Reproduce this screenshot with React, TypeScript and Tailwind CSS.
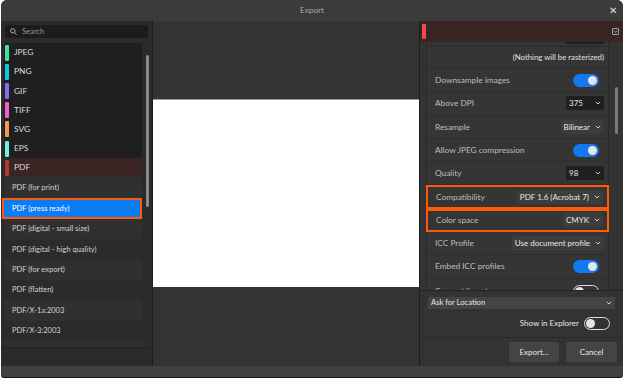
import React from 'react';

const formats = [
  { name: 'JPEG', color: 'bg-[#3ee6a0]' },
  { name: 'PNG', color: 'bg-[#12c9d6]' },
  { name: 'GIF', color: 'bg-[#8a6cf0]' },
  { name: 'TIFF', color: 'bg-[#f55fc8]' },
  { name: 'SVG', color: 'bg-[#f59a4a]' },
  { name: 'EPS', color: 'bg-[#6ff0e0]' },
];

const presets = [
  'PDF (for print)',
  'PDF (press ready)',
  'PDF (digital - small size)',
  'PDF (digital - high quality)',
  'PDF (for export)',
  'PDF (flatten)',
  'PDF/X-1a:2003',
  'PDF/X-3:2003',
  '',
];

function Chevron() {
  return (
    <svg width="6" height="4" viewBox="0 0 6 4" className="shrink-0">
      <path d="M0.8 0.8 L3 3 L5.2 0.8" fill="none" stroke="#cfcfcf" strokeWidth="1" />
    </svg>
  );
}

function Select({ value, light }: { value: string; light?: boolean }) {
  return (
    <div
      className={`h-[14px] min-w-[38px] flex items-center justify-between gap-[5px] pl-[3px] pr-[3px] rounded-[2px] text-[8px] text-[#e8e8e8] ${
        light ? 'bg-[#3c3c3c]' : 'bg-[#1f1f1f]'
      }`}
    >
      <span>{value}</span>
      <Chevron />
    </div>
  );
}

function Toggle({ on }: { on: boolean }) {
  if (on) {
    return (
      <div className="w-[26px] h-[13px] rounded-full bg-[#1478f0] flex items-center justify-end pr-[2px]">
        <div className="w-[9px] h-[9px] rounded-full bg-[#e6e6e6]" />
      </div>
    );
  }
  return (
    <div className="w-[26px] h-[13px] rounded-full border border-[#e0e0e0] flex items-center pl-[1px]">
      <div className="w-[9px] h-[9px] rounded-full bg-[#e6e6e6]" />
    </div>
  );
}

function Row({
  label,
  children,
  hl,
  h = 'h-[23.3px]',
}: {
  label?: string;
  children?: React.ReactNode;
  hl?: boolean;
  h?: string;
}) {
  return (
    <div
      className={`${h} shrink-0 flex items-center justify-between pl-[8px] pr-[4px] ${
        hl ? 'border-2 border-[#ff5a0a] -mx-[1px] pl-[7px] pr-[2px]' : 'border-b border-[#2c2c2c]'
      }`}
    >
      <span className="text-[8.3px] text-[#bdbdbd]">{label}</span>
      {children}
    </div>
  );
}

export default function App() {
  return (
    <div
      className="w-[628px] h-[383px] bg-white pl-[1px]"
      style={{ fontFamily: 'Lato, "Open Sans", sans-serif' }}
    >
      <div className="w-[622px] h-[378px] flex flex-col rounded-t-[6px] rounded-b-[3px] overflow-hidden bg-[#333] border-b border-[#111]">
        {/* title bar */}
        <div className="h-[21px] shrink-0 bg-[#3b3b3b] flex items-center relative">
          <span className="flex-1 text-center text-[8.2px] text-[#a8a8a8]">Export</span>
          <span className="absolute right-[6px] top-[5px] text-[10px] text-[#e0e0e0] leading-none">✕</span>
        </div>

        <div className="h-[345px] shrink-0 flex">
          {/* left panel */}
          <div className="w-[152px] shrink-0 bg-[#2b2b2b] border-r border-[#1d1d1d] flex flex-col">
            <div className="px-[4px] pt-[4px] h-[22px] shrink-0">
              <div className="h-[13px] rounded-[2px] bg-[#1c1c1c] flex items-center gap-[5px] pl-[5px]">
                <svg width="7" height="7" viewBox="0 0 7 7">
                  <circle cx="2.8" cy="2.8" r="2.2" fill="none" stroke="#bdbdbd" strokeWidth="0.9" />
                  <path d="M4.4 4.4 L6.5 6.5" stroke="#bdbdbd" strokeWidth="1" />
                </svg>
                <span className="text-[7.6px] text-[#9a9a9a]">Search</span>
              </div>
            </div>
            <div className="flex-1 flex overflow-hidden">
              <div className="w-[141px] pl-[3px] flex flex-col">
                {formats.map((f) => (
                  <div key={f.name} className="h-[19.2px] shrink-0 bg-[#1f1f1f] flex items-center gap-[5px] pl-[1px]">
                    <div className={`w-[4px] h-[16px] rounded-[1px] ${f.color}`} />
                    <span className="text-[8.4px] text-[#dcdcdc]">{f.name}</span>
                  </div>
                ))}
                <div className="h-[19.2px] shrink-0 bg-[#3a2424] flex items-center gap-[5px] pl-[1px]">
                  <div className="w-[4px] h-[16px] rounded-[1px] bg-[#b03a3a]" />
                  <span className="text-[8.4px] text-[#dcdcdc]">PDF</span>
                </div>
                {presets.map((p, i) =>
                  i === 1 ? (
                    <div
                      key={i}
                      className="h-[21px] shrink-0 -ml-[2px] border-2 border-[#ff5a0a] bg-[#0a7cf5] flex items-center pl-[8px]"
                    >
                      <span className="text-[7.5px] text-white">{p}</span>
                    </div>
                  ) : (
                    <div
                      key={i}
                      className={`h-[20.4px] shrink-0 flex items-center pl-[8px] rounded-[2px] ${
                        i % 2 === 0 ? 'bg-[#303030]' : ''
                      }`}
                    >
                      <span className="text-[7.5px] text-[#d2d2d2]">{p}</span>
                    </div>
                  )
                )}
              </div>
              <div className="flex-1 flex justify-center pt-[12px]">
                <div className="w-[3px] h-[152px] rounded-full bg-[#8a8a8a]" />
              </div>
            </div>
            <div className="h-[19px] shrink-0 border-t border-[#222]" />
          </div>

          {/* preview */}
          <div className="flex-1 flex flex-col bg-[#333]">
            <div className="h-[78px] shrink-0" />
            <div className="h-[188px] shrink-0 bg-white border-t border-[#9a9a9a]" />
          </div>

          {/* right panel */}
          <div className="w-[204px] shrink-0 border-l border-[#1d1d1d] flex flex-col bg-[#333]">
            <div className="h-[21px] shrink-0 bg-[#3a2525] flex items-center justify-between pl-[2px] pr-[4px]">
              <div className="w-[4px] h-[15px] rounded-[1px] bg-[#f04a4a]" />
              <div className="w-[7px] h-[7px] border border-[#a0a0a0] rounded-[1px] flex items-center justify-center">
                <svg width="5" height="3" viewBox="0 0 5 3">
                  <path d="M0.7 0.5 L2.5 2.4 L4.3 0.5" fill="none" stroke="#bbb" strokeWidth="0.8" />
                </svg>
              </div>
            </div>
            <div className="h-[248px] shrink-0 flex overflow-hidden">
              <div className="w-[189px] pl-[6px] flex flex-col">
                <div className="flex-1 flex flex-col border-l border-r border-[#2a2a2a] bg-[#353535]">
                  <div className="h-[5px] shrink-0 flex justify-end pr-[4px] border-b border-[#2a2a2a]">
                    <div className="w-[38px] h-[2px] bg-[#1f1f1f]" />
                  </div>
                  <Row h="h-[22px]">
                    <span className="text-[7.8px] text-[#e0e0e0]">(Nothing will be rasterized)</span>
                  </Row>
                  <Row label="Downsample images">
                    <div className="mr-[5px]">
                      <Toggle on />
                    </div>
                  </Row>
                  <Row label="Above DPI">
                    <Select value="375" />
                  </Row>
                  <Row label="Resample">
                    <Select value="Bilinear" light />
                  </Row>
                  <Row label="Allow JPEG compression">
                    <div className="mr-[5px]">
                      <Toggle on />
                    </div>
                  </Row>
                  <Row label="Quality">
                    <Select value="98" />
                  </Row>
                  <Row label="Compatibility" hl>
                    <Select value="PDF 1.6 (Acrobat 7)" light />
                  </Row>
                  <Row label="Color space" hl>
                    <Select value="CMYK" light />
                  </Row>
                  <Row label="ICC Profile">
                    <Select value="Use document profile" light />
                  </Row>
                  <Row label="Embed ICC profiles">
                    <div className="mr-[5px]">
                      <Toggle on />
                    </div>
                  </Row>
                  <Row label="Convert lines to curves" h="h-[26px]">
                    <div className="mr-[5px]">
                      <Toggle on={false} />
                    </div>
                  </Row>
                </div>
              </div>
              <div className="flex-1 flex justify-center pt-[45px]">
                <div className="w-[3px] h-[47px] rounded-full bg-[#7a7a7a]" />
              </div>
            </div>
            <div className="flex-1 border-t border-[#222] flex flex-col">
              <div className="px-[8px] pt-[6px]">
                <div className="h-[12px] bg-[#444] flex items-center justify-between pl-[3px] pr-[3px]">
                  <span className="text-[7.6px] text-[#e6e6e6]">Ask for Location</span>
                  <Chevron />
                </div>
              </div>
              <div className="h-[28px] shrink-0 flex items-center justify-end gap-[5px] pr-[13px]">
                <span className="text-[8px] text-[#e6e6e6]">Show in Explorer</span>
                <Toggle on={false} />
              </div>
              <div className="flex-1 border-t border-[#292929] flex items-center justify-end gap-[7px] pr-[6px] pb-[1px]">
                <div className="w-[50px] h-[20px] rounded-[2px] bg-[#444] flex items-center justify-center text-[8px] text-[#e6e6e6]">
                  Export...
                </div>
                <div className="w-[51px] h-[20px] rounded-[2px] bg-[#444] flex items-center justify-center text-[8px] text-[#e6e6e6]">
                  Cancel
                </div>
              </div>
            </div>
          </div>
        </div>

        {/* status bar */}
        <div className="flex-1 bg-[#404040]" />
      </div>
    </div>
  );
}
